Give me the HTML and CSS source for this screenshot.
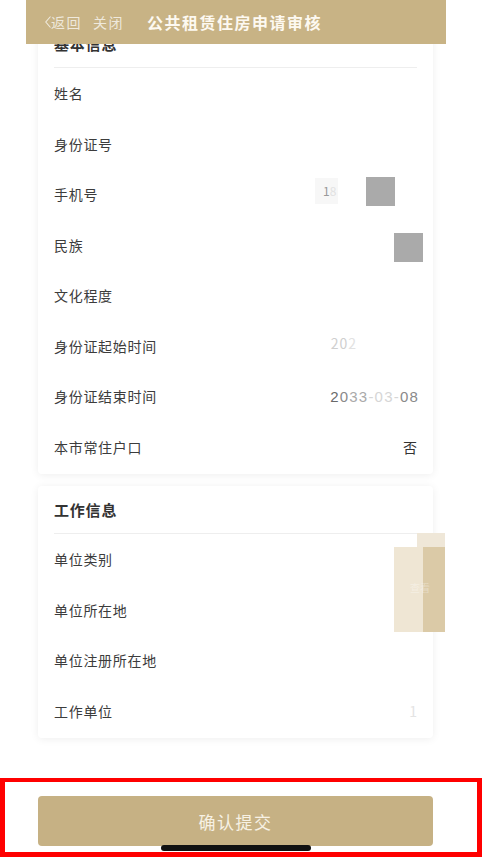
FILE: index.html
```html
<!DOCTYPE html>
<html lang="zh-CN">
<head>
<meta charset="utf-8">
<title>公共租赁住房申请审核</title>
<link rel="stylesheet" href="styles.css">
</head>
<body>
<div class="app">
  <header class="nav">
    <svg class="chev" width="6" height="12" viewBox="0 0 6 12"><polyline points="5.5,0.5 0.8,6 5.5,11.5" fill="none" stroke="currentColor" stroke-width="1.1"/></svg>
    <span class="nav-link">返回</span>
    <span class="nav-link close">关闭</span>
    <span class="nav-title">公共租赁住房申请审核</span>
  </header>

  <main class="content">
    <section class="card">
      <div class="card-title">基本信息</div>
      <div class="row"><span class="label">姓名</span></div>
      <div class="row"><span class="label">身份证号</span></div>
      <div class="row"><span class="label">手机号</span>
        <span class="val phone"><span class="redact-light">1<span class="fade">8</span></span><span class="redact-sq"></span></span>
      </div>
      <div class="row"><span class="label">民族</span>
        <span class="val nation"><span class="redact-sq"></span></span>
      </div>
      <div class="row"><span class="label">文化程度</span></div>
      <div class="row"><span class="label">身份证起始时间</span>
        <span class="val date-start">20<span class="fade">2</span></span>
      </div>
      <div class="row"><span class="label">身份证结束时间</span>
        <span class="val date-end">2<span class="mid">0</span><span class="light">33</span><span class="faint">-03-</span><span class="mid">08</span></span>
      </div>
      <div class="row"><span class="label">本市常住户口</span><span class="val">否</span></div>
    </section>

    <section class="card">
      <div class="card-title">工作信息</div>
      <div class="row"><span class="label">单位类别</span></div>
      <div class="row"><span class="label">单位所在地</span></div>
      <div class="row"><span class="label">单位注册所在地</span></div>
      <div class="row"><span class="label">工作单位</span><span class="val ghost">1</span></div>
    </section>
  </main>
</div>

<footer class="submit-bar">
  <button class="submit">确认提交</button>
</footer>

<div class="float-tab">
  <div class="float-top"></div>
  <div class="float-body"><span class="float-a"></span><span class="float-b"></span><span class="float-text">查看</span></div>
</div>
<div class="home-indicator"></div>
</body>
</html>
```

FILE: styles.css
```css
html, body {
  margin: 0;
  padding: 0;
  background: #ffffff;
}
body {
  font-family: "Noto Sans CJK SC", "Noto Sans", "Liberation Sans", sans-serif;
  color: #333;
  width: 482px;
  height: 862px;
  overflow: hidden;
}
.app {
  margin-left: 26px;
  width: 420px;
}
.nav {
  position: fixed;
  top: 0;
  left: 26px;
  width: 420px;
  height: 44px;
  background: #c8b385;
  display: flex;
  align-items: center;
  padding-left: 19px;
  box-sizing: border-box;
  z-index: 5;
  color: rgba(255, 255, 255, 0.72);
}
.chev {
  display: block;
  margin-right: 0;
  margin-top: 0;
}
.nav-link {
  font-size: 14px;
  letter-spacing: 1.5px;
  line-height: 20px;
}
.nav-link.close {
  margin-left: 11px;
}
.nav-title {
  margin-left: 23px;
  color: #fdf9f1;
  font-size: 16px;
  font-weight: 700;
  letter-spacing: 1.5px;
  line-height: 22px;
}
.content {
  padding: 20px 13px 0 12px;
  display: flex;
  flex-direction: column;
  gap: 12px;
}
.card {
  background: #fff;
  border-radius: 4px;
  box-shadow: 0 1px 8px rgba(0, 0, 0, 0.07);
  padding: 0 16px 2px;
}
.card-title {
  height: 48px;
  box-sizing: border-box;
  border-bottom: 1px solid #eeeeee;
  display: flex;
  align-items: center;
  font-size: 15px;
  font-weight: 700;
  letter-spacing: 0.8px;
  color: #333;
}
.row {
  height: 50.5px;
  display: flex;
  align-items: center;
  justify-content: space-between;
}
.label {
  font-size: 14px;
  letter-spacing: 0.7px;
  color: #3c3c3c;
}
.val {
  font-size: 14px;
  color: #333;
  display: flex;
  align-items: center;
}
.phone {
  margin-right: 22px;
  margin-top: -6px;
}
.redact-light {
  width: 15px;
  height: 26px;
  padding-left: 8px;
  background: #f7f7f7;
  color: #999;
  font-size: 12px;
  line-height: 26px;
  overflow: hidden;
  white-space: nowrap;
  margin-right: 28px;
}
.redact-sq {
  width: 29px;
  height: 29px;
  background: #aaaaaa;
  display: block;
}
.nation {
  margin-right: -6px;
  margin-top: 6px;
}
.fade { color: #e2e2e2; }
.date-start {
  margin-right: 60px;
  margin-top: -6px;
  color: #cfcfcf;
  font-size: 14px;
  letter-spacing: 1px;
}
.date-end {
  font-family: "Liberation Sans", sans-serif;
  font-size: 15px;
  letter-spacing: 1.2px;
  color: #6a6a6a;
  margin-right: -2px;
}
.date-end .mid { color: #8a8a8a; }
.date-end .light { color: #aaaaaa; }
.date-end .faint { color: #d6d6d6; }
.ghost {
  color: #e4e4e4;
  font-size: 14px;
}
.submit-bar {
  position: absolute;
  left: 0;
  top: 778px;
  width: 482px;
  height: 79px;
  box-sizing: border-box;
  border: 5px solid #ff0000;
  border-top-width: 4.5px;
  background: #fff;
  padding: 14px 0 0 33px;
}
.submit {
  display: block;
  width: 395px;
  height: 50px;
  border: none;
  border-radius: 4px;
  background: #c6b184;
  color: #f7f1e4;
  font-family: "Noto Sans CJK SC", sans-serif;
  font-size: 17px;
  letter-spacing: 1.5px;
  padding: 0;
}
.float-tab {
  position: absolute;
  left: 394px;
  top: 533px;
  width: 51px;
  height: 99px;
  display: flex;
  flex-direction: column;
}
.float-top {
  height: 14px;
  margin-left: 23px;
  background: #efe7d8;
}
.float-body {
  flex: 1;
  display: flex;
  position: relative;
}
.float-a {
  width: 29px;
  background: #efe6d4;
}
.float-b {
  flex: 1;
  background: #dbcaa7;
}
.float-text {
  position: absolute;
  left: 16px;
  top: 33px;
  font-size: 10px;
  color: rgba(255, 255, 255, 0.35);
}
.home-indicator {
  position: absolute;
  left: 161px;
  top: 845px;
  width: 150px;
  height: 6px;
  border-radius: 3px;
  background: #111;
}
```
